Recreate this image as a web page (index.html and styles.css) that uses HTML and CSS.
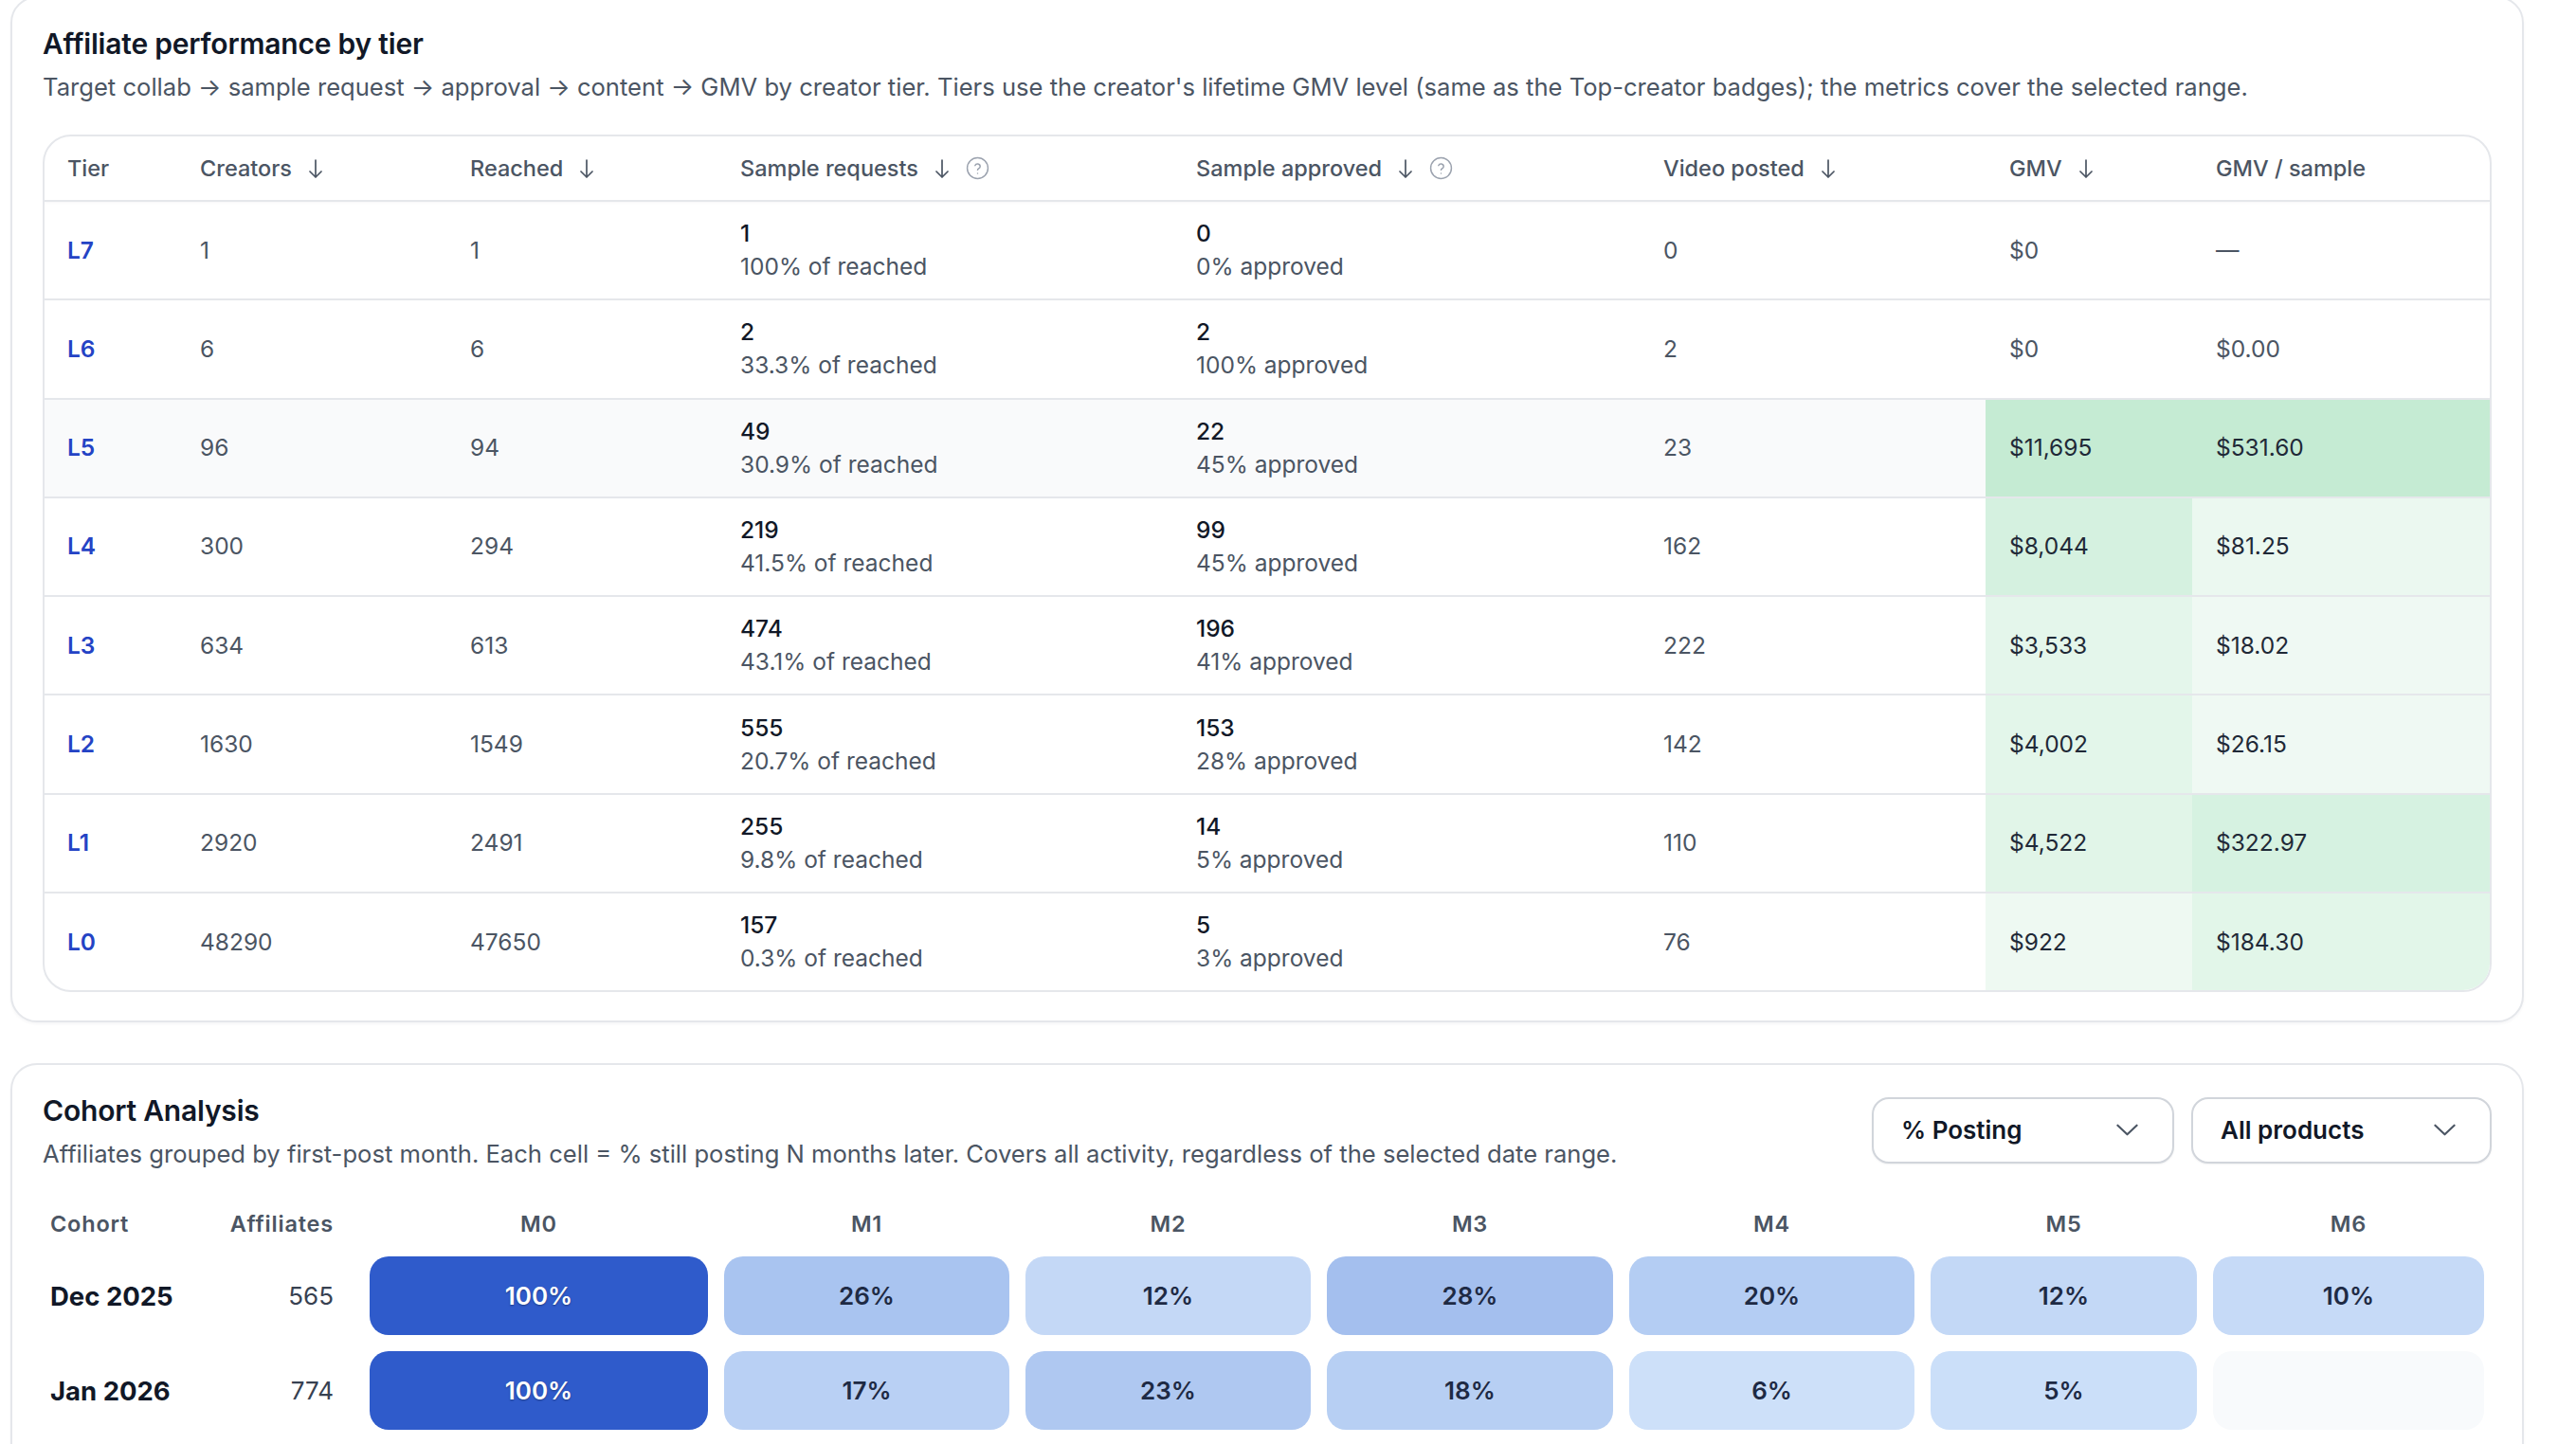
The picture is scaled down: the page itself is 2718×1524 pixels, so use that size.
FILE: index.html
```html
<!DOCTYPE html>
<html lang="en">
<head>
<meta charset="utf-8">
<title>Affiliate performance</title>
<link rel="stylesheet" href="styles.css">
</head>
<body>
<div class="page">
  <section class="card">
    <h2 class="card-title">Affiliate performance by tier</h2>
    <p class="card-sub">Target collab → sample request → approval → content → GMV by creator tier. Tiers use the creator's lifetime GMV level (same as the Top-creator badges); the metrics cover the selected range.</p>
    <div class="table-wrap">
      <table class="tier-table">
        <colgroup>
          <col class="c-tier"><col class="c-creators"><col class="c-reached"><col class="c-sr"><col class="c-sa"><col class="c-vp"><col class="c-gmv"><col>
        </colgroup>
        <thead>
          <tr>
            <th>Tier</th>
            <th><span class="th-in">Creators <svg class="sort" viewBox="0 0 16 20"><path d="M8 1v18M2 13l6 6 6-6"/></svg></span></th>
            <th><span class="th-in">Reached <svg class="sort" viewBox="0 0 16 20"><path d="M8 1v18M2 13l6 6 6-6"/></svg></span></th>
            <th><span class="th-in">Sample requests <svg class="sort" viewBox="0 0 16 20"><path d="M8 1v18M2 13l6 6 6-6"/></svg><svg class="help" viewBox="0 0 24 24"><circle cx="12" cy="12" r="10.5"/><path d="M9.4 9.3a2.7 2.7 0 0 1 5.2.9c0 1.8-2.6 2.4-2.6 3.6"/><path d="M12 17.2h.01"/></svg></span></th>
            <th><span class="th-in">Sample approved <svg class="sort" viewBox="0 0 16 20"><path d="M8 1v18M2 13l6 6 6-6"/></svg><svg class="help" viewBox="0 0 24 24"><circle cx="12" cy="12" r="10.5"/><path d="M9.4 9.3a2.7 2.7 0 0 1 5.2.9c0 1.8-2.6 2.4-2.6 3.6"/><path d="M12 17.2h.01"/></svg></span></th>
            <th><span class="th-in">Video posted <svg class="sort" viewBox="0 0 16 20"><path d="M8 1v18M2 13l6 6 6-6"/></svg></span></th>
            <th><span class="th-in">GMV <svg class="sort" viewBox="0 0 16 20"><path d="M8 1v18M2 13l6 6 6-6"/></svg></span></th>
            <th>GMV / sample</th>
          </tr>
        </thead>
        <tbody>
          <tr>
            <td class="tier">L7</td><td>1</td><td>1</td>
            <td><div class="main">1</div><div class="sub">100% of reached</div></td>
            <td><div class="main">0</div><div class="sub">0% approved</div></td>
            <td>0</td><td>$0</td><td>—</td>
          </tr>
          <tr>
            <td class="tier">L6</td><td>6</td><td>6</td>
            <td><div class="main">2</div><div class="sub">33.3% of reached</div></td>
            <td><div class="main">2</div><div class="sub">100% approved</div></td>
            <td>2</td><td>$0</td><td>$0.00</td>
          </tr>
          <tr class="hover">
            <td class="tier">L5</td><td>96</td><td>94</td>
            <td><div class="main">49</div><div class="sub">30.9% of reached</div></td>
            <td><div class="main">22</div><div class="sub">45% approved</div></td>
            <td>23</td><td class="heat" style="background:#c5ebd3">$11,695</td><td class="heat" style="background:#c5ebd3">$531.60</td>
          </tr>
          <tr>
            <td class="tier">L4</td><td>300</td><td>294</td>
            <td><div class="main">219</div><div class="sub">41.5% of reached</div></td>
            <td><div class="main">99</div><div class="sub">45% approved</div></td>
            <td>162</td><td class="heat" style="background:#d5f1e0">$8,044</td><td class="heat" style="background:#ebf8f0">$81.25</td>
          </tr>
          <tr>
            <td class="tier">L3</td><td>634</td><td>613</td>
            <td><div class="main">474</div><div class="sub">43.1% of reached</div></td>
            <td><div class="main">196</div><div class="sub">41% approved</div></td>
            <td>222</td><td class="heat" style="background:#e4f6eb">$3,533</td><td class="heat" style="background:#eff9f3">$18.02</td>
          </tr>
          <tr>
            <td class="tier">L2</td><td>1630</td><td>1549</td>
            <td><div class="main">555</div><div class="sub">20.7% of reached</div></td>
            <td><div class="main">153</div><div class="sub">28% approved</div></td>
            <td>142</td><td class="heat" style="background:#e3f6ea">$4,002</td><td class="heat" style="background:#eff9f3">$26.15</td>
          </tr>
          <tr>
            <td class="tier">L1</td><td>2920</td><td>2491</td>
            <td><div class="main">255</div><div class="sub">9.8% of reached</div></td>
            <td><div class="main">14</div><div class="sub">5% approved</div></td>
            <td>110</td><td class="heat" style="background:#e1f5e8">$4,522</td><td class="heat" style="background:#d6f2e1">$322.97</td>
          </tr>
          <tr>
            <td class="tier">L0</td><td>48290</td><td>47650</td>
            <td><div class="main">157</div><div class="sub">0.3% of reached</div></td>
            <td><div class="main">5</div><div class="sub">3% approved</div></td>
            <td>76</td><td class="heat" style="background:#eef9f2">$922</td><td class="heat" style="background:#e2f6e9">$184.30</td>
          </tr>
        </tbody>
      </table>
    </div>
  </section>

  <section class="card card-cohort">
    <div class="cohort-head">
      <div class="head-text">
        <h2 class="card-title">Cohort Analysis</h2>
        <p class="card-sub">Affiliates grouped by first-post month. Each cell = % still posting N months later. Covers all activity, regardless of the selected date range.</p>
      </div>
      <div class="selects">
        <button class="select s-metric">% Posting <svg class="chev" viewBox="0 0 24 13"><polyline points="1.5,1.5 12,11.5 22.5,1.5"/></svg></button>
        <button class="select s-product">All products <svg class="chev" viewBox="0 0 24 13"><polyline points="1.5,1.5 12,11.5 22.5,1.5"/></svg></button>
      </div>
    </div>
    <div class="cohort-grid">
      <div class="ch ch-left">Cohort</div>
      <div class="ch ch-right">Affiliates</div>
      <div class="ch">M0</div><div class="ch">M1</div><div class="ch">M2</div><div class="ch">M3</div><div class="ch">M4</div><div class="ch">M5</div><div class="ch">M6</div>

      <div class="c-name">Dec 2025</div>
      <div class="c-count">565</div>
      <div class="cell cell-full">100%</div>
      <div class="cell" style="background:#a9c4f0">26%</div>
      <div class="cell" style="background:#c4d8f6">12%</div>
      <div class="cell" style="background:#a4bfee">28%</div>
      <div class="cell" style="background:#b4cdf3">20%</div>
      <div class="cell" style="background:#c3d8f6">12%</div>
      <div class="cell" style="background:#c6daf7">10%</div>

      <div class="c-name">Jan 2026</div>
      <div class="c-count">774</div>
      <div class="cell cell-full">100%</div>
      <div class="cell" style="background:#b9d0f4">17%</div>
      <div class="cell" style="background:#afc8f1">23%</div>
      <div class="cell" style="background:#b7cff3">18%</div>
      <div class="cell" style="background:#cde0f9">6%</div>
      <div class="cell" style="background:#cbdff9">5%</div>
      <div class="cell cell-empty"></div>
    </div>
  </section>
</div>
</body>
</html>
```
FILE: styles.css
```css
* { box-sizing: border-box; }

html, body {
  margin: 0;
  padding: 0;
  background: #ffffff;
}

body {
  font-family: Inter, "Noto Sans", "Liberation Sans", sans-serif;
  color: #111827;
  overflow: hidden;
}

.page {
  margin-top: -4px;
  padding: 0 55px 40px 11px;
  display: flex;
  flex-direction: column;
  gap: 43px;
}

.card {
  background: #fff;
  border: 2px solid #e5e7eb;
  border-radius: 28px;
  padding: 26px 32px 30px;
  box-shadow: 0 2px 3px rgba(17, 24, 39, 0.04);
}

.card-title {
  margin: 0;
  font-size: 30px;
  line-height: 44px;
  font-weight: 600;
  color: #111827;
  letter-spacing: -0.2px;
}

.card-sub {
  margin: 6px 0 0;
  font-size: 25.6px;
  line-height: 35px;
  color: #4b5563;
  font-weight: 400;
}

/* ---------- tier table ---------- */
.table-wrap {
  margin-top: 33px;
  border: 2px solid #e5e7eb;
  border-radius: 30px;
  overflow: hidden;
}

.tier-table {
  width: 100%;
  border-collapse: collapse;
  table-layout: fixed;
  font-size: 24.5px;
}

.c-tier { width: 139px; }
.c-creators { width: 285px; }
.c-reached { width: 285px; }
.c-sr { width: 481px; }
.c-sa { width: 493px; }
.c-vp { width: 365px; }
.c-gmv { width: 218px; }

.tier-table th {
  text-align: left;
  font-weight: 500;
  font-size: 23.5px;
  line-height: 34px;
  color: #4b5563;
  padding: 16.5px 25px;
  white-space: nowrap;
}

.tier-table th:first-child,
.tier-table td:first-child { padding-left: 24px; }

.th-in {
  display: inline-flex;
  align-items: center;
}

.sort {
  width: 16px;
  height: 20px;
  margin-left: 17px;
  fill: none;
  stroke: #4b5563;
  stroke-width: 1.7;
  stroke-linecap: round;
  stroke-linejoin: round;
}

.help {
  width: 25px;
  height: 25px;
  margin-left: 17px;
  fill: none;
  stroke: #9ca3af;
  stroke-width: 1.4;
  stroke-linecap: round;
  stroke-linejoin: round;
}

.tier-table thead tr {
  box-shadow: 0 2px 3px rgba(17, 24, 39, 0.04);
}

.tier-table td {
  border-top: 2px solid #e5e7eb;
  padding: 16.15px 25px;
  line-height: 35px;
  color: #4b5563;
  vertical-align: middle;
  white-space: nowrap;
}

.tier-table tr.hover td { background: #f9fafb; }

.tier-table td.tier {
  color: #2443c5;
  font-weight: 600;
}

.tier-table td.heat { color: #1f2937; }

.main {
  color: #111827;
  font-weight: 500;
}

.sub { color: #4b5563; }

/* ---------- cohort ---------- */
.card-cohort { padding-bottom: 60px; }

.cohort-head {
  display: flex;
  align-items: center;
  justify-content: space-between;
  gap: 24px;
}

.selects {
  display: flex;
  gap: 18px;
}

.select {
  height: 70px;
  display: flex;
  align-items: center;
  justify-content: space-between;
  padding: 0 36px 0 29px;
  border: 2px solid #d1d5db;
  border-radius: 18px;
  background: #fff;
  box-shadow: 0 1px 2px rgba(17, 24, 39, 0.06);
  font-family: inherit;
  font-size: 26px;
  font-weight: 600;
  color: #111827;
}

.s-metric { width: 319px; }
.s-product { width: 317px; }

.chev {
  width: 23px;
  height: 13px;
  fill: none;
  stroke: #4b5563;
  stroke-width: 2.2;
  stroke-linecap: round;
  stroke-linejoin: round;
}

.cohort-grid {
  margin-top: 40px;
  display: grid;
  grid-template-columns: 145px 166px 357px 301px 301px 302px 301px 281px 286px;
  grid-template-rows: 34px 83px 83px;
  gap: 17px;
}

.ch {
  font-size: 23.5px;
  line-height: 34px;
  font-weight: 600;
  color: #4b5563;
  text-align: center;
  letter-spacing: 0.8px;
}

.ch-left { text-align: left; padding-left: 8px; }
.ch-right { text-align: right; padding-right: 21px; }

.c-name {
  display: flex;
  align-items: center;
  padding-left: 8px;
  font-size: 27.5px;
  font-weight: 700;
  color: #111827;
}

.c-count {
  display: flex;
  align-items: center;
  justify-content: flex-end;
  padding-right: 21px;
  font-size: 26px;
  color: #374151;
}

.cell {
  display: flex;
  align-items: center;
  justify-content: center;
  border-radius: 20px;
  font-size: 26px;
  font-weight: 600;
  color: #1e2a44;
}

.cell-full {
  background: #2f5bcb;
  color: #ffffff;
  text-shadow: 0 1px 2px rgba(0, 0, 0, 0.35);
}

.cell-empty { background: #f8fafc; }
```
